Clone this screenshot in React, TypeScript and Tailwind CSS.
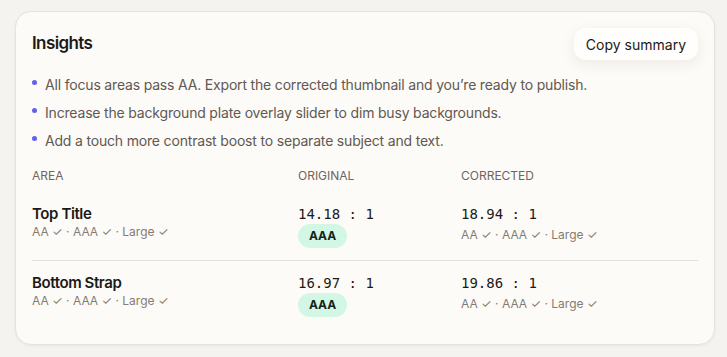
import React from 'react';

const tips = [
  "All focus areas pass AA. Export the corrected thumbnail and you\u2019re ready to publish.",
  'Increase the background plate overlay slider to dim busy backgrounds.',
  'Add a touch more contrast boost to separate subject and text.',
];

const rows = [
  { name: 'Top Title', original: '14.18 : 1', corrected: '18.94 : 1' },
  { name: 'Bottom Strap', original: '16.97 : 1', corrected: '19.86 : 1' },
];

const Checks: React.FC<{ className?: string }> = ({ className = '' }) => (
  <div className={`text-[12px] leading-4 text-[#847b74] ${className}`}>AA ✓ · AAA ✓ · Large ✓</div>
);

export default function App() {
  return (
    <div className="min-h-screen bg-[#f5f3ef] pl-[15px] pr-[12px] pt-[11px] font-['Inter',sans-serif]">
      <section className="w-[700px] rounded-[16px] border border-[#e6e2dc] bg-[#fdfbf7] px-4 pt-4 pb-[15px] shadow-[0_1px_3px_rgba(0,0,0,0.05)]">
        {/* Header */}
        <div className="flex h-8 items-center justify-between">
          <h2 className="text-[17px] font-semibold tracking-[-0.6px] text-[#1c1917]">Insights</h2>
          <button className="h-8 rounded-[12px] bg-[#fffefc] px-3 text-[14px] text-[#1c1917] shadow-[0_4px_14px_rgba(60,40,20,0.08)]">
            Copy summary
          </button>
        </div>

        {/* Tips */}
        <ul className="mt-[15px] space-y-2">
          {tips.map((t) => (
            <li key={t} className="flex h-5 items-start gap-2 text-[14px] leading-5 tracking-[-0.18px] text-[#615852]">
              <span className="mt-[5px] h-[5px] w-[5px] shrink-0 rounded-full bg-[#6360ee]" />
              <span>{t}</span>
            </li>
          ))}
        </ul>

        {/* Table */}
        <div className="mt-[17px] grid grid-cols-[266px_163px_1fr] pb-2 text-[12px] leading-4 text-[#6e655e]">
          <div>AREA</div>
          <div>ORIGINAL</div>
          <div>CORRECTED</div>
        </div>

        {rows.map((r, i) => (
          <div
            key={r.name}
            className={`grid grid-cols-[266px_163px_1fr] py-3 ${i > 0 ? 'border-t border-[#e4e1dd]' : ''}`}
          >
            <div>
              <div className="text-[15px] font-semibold leading-5 tracking-[-0.4px] text-[#1c1917]">{r.name}</div>
              <Checks />
            </div>
            <div className="flex flex-col items-start">
              <div className="font-['DejaVu_Sans_Mono',monospace] text-[14px] leading-5 text-[#1c1917]">{r.original}</div>
              <span className="flex h-6 w-[49px] items-center justify-center rounded-full bg-[#d3f7e5] text-[12px] font-bold text-[#14231b]">
                AAA
              </span>
            </div>
            <div>
              <div className="font-['DejaVu_Sans_Mono',monospace] text-[14px] leading-5 text-[#1c1917]">{r.corrected}</div>
              <Checks className="mt-[3px]" />
            </div>
          </div>
        ))}
      </section>
    </div>
  );
}
